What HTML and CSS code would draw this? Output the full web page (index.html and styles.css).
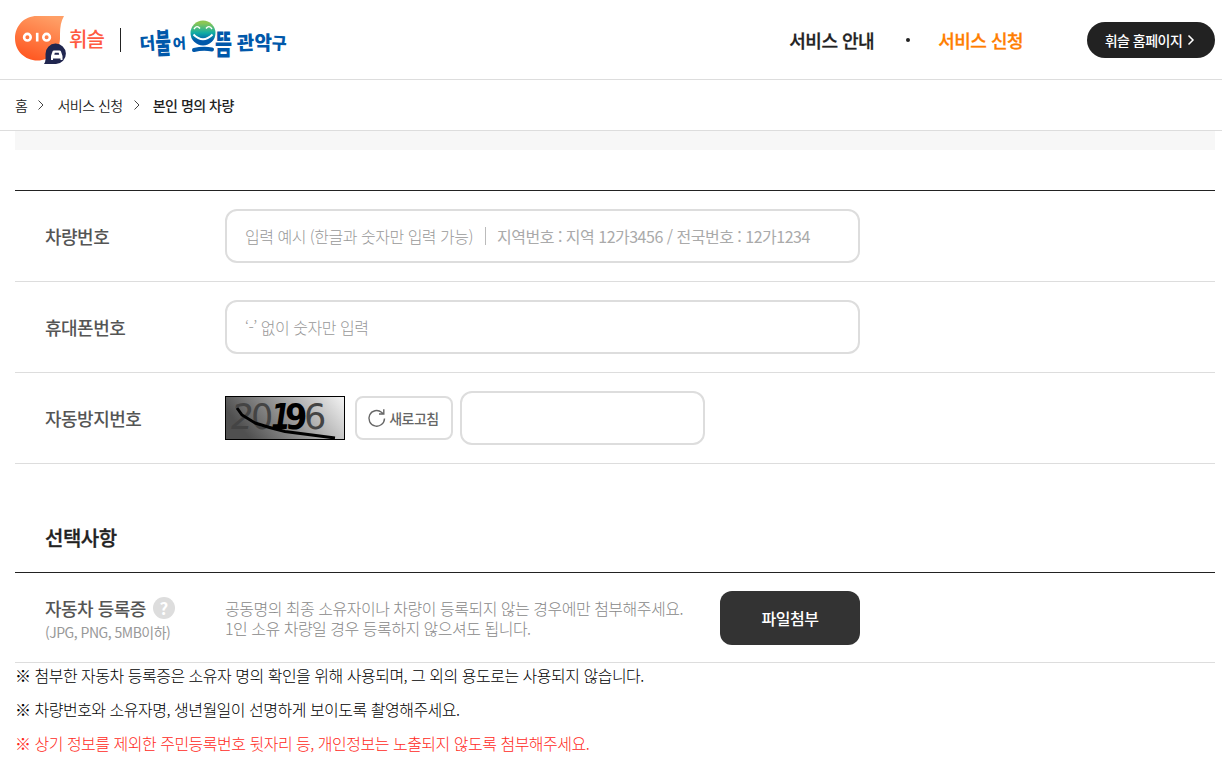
FILE: index.html
```html
<!DOCTYPE html>
<html lang="ko">
<head>
    <meta charset="UTF-8">
    <meta name="viewport" content="width=device-width, initial-scale=1.0">
    <title>휘슬</title>
    <link rel="stylesheet" href="styles.css">
</head>
<body>
    <header class="header">
        <div class="inner">
            <a class="logo">
                <svg width="90" height="50" viewBox="0 0 90 50">
                    <defs>
                        <linearGradient id="orange" x1="0.7" y1="0" x2="0.3" y2="1">
                            <stop offset="0" stop-color="#ff9f66"/>
                            <stop offset="1" stop-color="#ff5620"/>
                        </linearGradient>
                    </defs>
                    <path d="M22 1H49C46 6 45 12 45 19V23C45 36 35 45.500 22.500 45.500S0 36 0 23.500S9 1 22 1Z" fill="url(#orange)"/>
                    <circle cx="12.400" cy="22.200" r="3.300" fill="none" stroke="#fff" stroke-width="2.600"/>
                    <circle cx="31.600" cy="22.200" r="3.300" fill="none" stroke="#fff" stroke-width="2.600"/>
                    <path d="M22.200 17.800V26.500" stroke="#fff" stroke-width="2.600"/>
                    <path d="M29 49C31 46.500 30.500 43 30.500 39A10.200 10.200 0 1 1 41 49Z" fill="#20264f"/>
                    <path d="M37.500 36.500Q37.800 35.500 39 35.500H44.500Q45.700 35.500 46 36.500L47.500 41V45H45.500V43.500H38V45H36V41Z" fill="#fff"/>
                    <path d="M39.300 39.800L39.800 37.800H43.700L44.200 39.800Z" fill="#20264f"/>
                    <text x="54" y="32" class="logo_text">휘슬</text>
                </svg>
            </a>
            <span class="bar"></span>
            <a class="logo2">
                <svg width="150" height="46" viewBox="0 0 150 46">
                    <defs>
                        <linearGradient id="face" x1="0" y1="0" x2="0" y2="1">
                            <stop offset="0.100" stop-color="#8cc653"/>
                            <stop offset="0.500" stop-color="#10ada5"/>
                            <stop offset="0.800" stop-color="#0058aa"/>
                        </linearGradient>
                    </defs>
                    <g class="brush">
                        <text transform="translate(0 33) rotate(-4) scale(1 1)" font-size="17">더</text>
                        <text transform="translate(16 37) rotate(-3) scale(.7 1.200)" font-size="24">불</text>
                        <text transform="translate(33 32) rotate(-3) scale(.95 .950)" font-size="15">어</text>
                        <text transform="translate(75 38) scale(.66 1)" font-size="28">뜸</text>
                        <text transform="translate(97 33) rotate(-2) scale(1 1)" font-size="19">관</text>
                        <text transform="translate(114.500 33) scale(1 1)" font-size="19">악</text>
                        <text transform="translate(131.500 32) rotate(3) scale(.95 1)" font-size="17">구</text>
                    </g>
                    <circle cx="63" cy="16" r="12.500" fill="url(#face)"/>
                    <path d="M54 12Q57 7.500 60 11.500M66 11.500Q69 7.500 72 12" fill="none" stroke="#fff" stroke-width="1.400"/>
                    <path d="M53.500 17.500Q63 27 72.500 17.500" fill="none" stroke="#fff" stroke-width="1.900"/>
                    <path d="M54 33Q63 31 72 32.500" fill="none" stroke="#0058aa" stroke-width="4" stroke-linecap="round"/>
                </svg>
            </a>
            <nav class="nav">
                <a>서비스 안내</a>
                <i class="dot"></i>
                <a class="on">서비스 신청</a>
            </nav>
            <a class="home_btn">휘슬 홈페이지
                <svg width="8" height="12" viewBox="0 0 8 12"><path d="M1.500 1.500L6 6L1.500 10.500" fill="none" stroke="#fff" stroke-width="1.500"/></svg>
            </a>
        </div>
    </header>
    <div class="path">
        <div class="inner">
            <span>홈</span>
            <svg width="8" height="10" viewBox="0 0 8 10"><path d="M1.500 .5L6 5L1.500 9.500" fill="none" stroke="#444"/></svg>
            <span>서비스 신청</span>
            <svg width="8" height="10" viewBox="0 0 8 10"><path d="M1.500 .5L6 5L1.500 9.500" fill="none" stroke="#444"/></svg>
            <strong>본인 명의 차량</strong>
        </div>
    </div>
    <div class="content">
        <div class="gray_box"></div>
        <div class="form">
            <div class="row">
                <label class="tit">차량번호</label>
                <div class="field">
                    <span>입력 예시 (한글과 숫자만 입력 가능)</span><i class="line"></i><b>지역번호 : 지역 12가3456 / 전국번호 : 12가1234</b>
                </div>
            </div>
            <div class="row">
                <label class="tit">휴대폰번호</label>
                <input class="field" type="text" placeholder="‘-’ 없이 숫자만 입력">
            </div>
            <div class="row">
                <label class="tit">자동방지번호</label>
                <svg class="captcha" width="120" height="44" viewBox="0 0 120 44">
                    <defs>
                        <linearGradient id="cap" x1="0" y1="0.300" x2="1" y2="0">
                            <stop offset="0" stop-color="#505050"/>
                            <stop offset="1" stop-color="#f4f4f4"/>
                        </linearGradient>
                    </defs>
                    <rect x=".5" y=".5" width="119" height="43" fill="url(#cap)" stroke="#000"/>
                    <g class="num">
                        <text x="6" y="33" font-style="italic">2</text>
                        <text x="26" y="33">0</text>
                        <text transform="translate(46 33) scale(.8 1)" class="black" font-style="italic">1</text>
                        <text transform="translate(60 33) scale(.92 1)" class="black">9</text>
                        <text x="79" y="33">6</text>
                    </g>
                    <path d="M12 12L17 19L30 27Q45 32 60 35.500L110 42" fill="none" stroke="#000" stroke-width="3"/>
                </svg>
                <button class="refresh">
                    <svg width="18" height="20" viewBox="0 0 18 20"><path d="M16.500 10.500A7.800 7.800 0 1 1 13.500 4.200L15.500 6M15.800 1.200V6H11" fill="none" stroke="#666" stroke-width="1.400"/></svg>새로고침
                </button>
                <input class="field small" type="text">
            </div>
        </div>
        <h3 class="sub_tit">선택사항</h3>
        <div class="form">
            <div class="row file">
                <div class="tit">
                    <div class="tit_top">자동차 등록증<i class="help">?</i></div>
                    <p class="ext">(JPG, PNG, 5MB이하)</p>
                </div>
                <p class="desc">공동명의 최종 소유자이나 차량이 등록되지 않는 경우에만 첨부해주세요.<br>1인 소유 차량일 경우 등록하지 않으셔도 됩니다.</p>
                <button class="file_btn">파일첨부</button>
            </div>
        </div>
        <ul class="notice">
            <li>※ 첨부한 자동차 등록증은 소유자 명의 확인을 위해 사용되며, 그 외의 용도로는 사용되지 않습니다.</li>
            <li>※ 차량번호와 소유자명, 생년월일이 선명하게 보이도록 촬영해주세요.</li>
            <li class="red">※ 상기 정보를 제외한 주민등록번호 뒷자리 등, 개인정보는 노출되지 않도록 첨부해주세요.</li>
        </ul>
    </div>
</body>
</html>
```
FILE: styles.css
```css
*{
    margin: 0;
    padding: 0;
    box-sizing: border-box;
}
body{
    font-family: "Noto Sans CJK KR", sans-serif;
    font-size: 16px;
    letter-spacing: -0.5px;
    color: #222;
    background: #fff;
    overflow: hidden;
}
input, button{
    font-family: inherit;
    letter-spacing: inherit;
    background: #fff;
}
svg{
    display: block;
    flex: none;
    overflow: visible;
}
ul li{
    list-style: none;
}
i{
    font-style: normal;
}
.header{
    height: 80px;
    border-bottom: 1px solid #ddd;
}
.inner{
    display: flex;
    align-items: center;
    width: 1200px;
    height: 100%;
    margin-left: 15px;
}
.logo_text{
    font-size: 20px;
    font-weight: 500;
    fill: #ff5a41;
    letter-spacing: -1px;
}
.bar{
    width: 1px;
    height: 24px;
    margin: 0 19px 0 15px;
    background: #222;
}
.brush{
    font-weight: 900;
    fill: #0058aa;
    letter-spacing: 0;
}
.nav{
    display: flex;
    align-items: center;
    margin-left: auto;
    font-size: 18px;
    font-weight: 500;
}
.nav a{
    -webkit-text-stroke: 0.3px;
}
.dot{
    width: 4px;
    height: 4px;
    margin: 0 28px 0 32px;
    border-radius: 50%;
    background: #222;
}
.nav .on{
    color: #ff7e00;
}
.home_btn{
    display: flex;
    align-items: center;
    justify-content: center;
    gap: 5px;
    width: 128px;
    height: 36px;
    padding-right: 2px;
    margin-left: 64px;
    border-radius: 18px;
    background: #222;
    color: #fff;
    font-size: 14px;
    font-weight: 500;
}
.path{
    height: 51px;
    border-bottom: 1px solid #ddd;
    font-size: 14px;
    font-weight: 350;
}
.path svg{
    margin: 0 12px 0 10px;
}
.path strong{
    font-weight: 500;
}
.content{
    width: 1200px;
    margin-left: 15px;
}
.gray_box{
    height: 19px;
    margin-bottom: 40px;
    background: #f7f7f7;
}
.form{
    border-top: 1px solid #222;
}
.row{
    display: flex;
    align-items: center;
    height: 91px;
    padding-left: 30px;
    border-bottom: 1px solid #ddd;
}
.row.file{
    height: 90px;
}
.tit{
    width: 180px;
    font-size: 18px;
    font-weight: 500;
    color: #555;
}
.field{
    display: flex;
    align-items: center;
    width: 635px;
    height: 54px;
    padding: 0 18px;
    border: 2px solid #ddd;
    border-radius: 12px;
    font-size: 16px;
    font-weight: 300;
    color: #999;
}
.field::placeholder{
    color: #999;
}
.field b{
    font-weight: 400;
    color: #aaa;
}
.line{
    width: 1px;
    height: 18px;
    margin: 0 11px 0 12px;
    background: #bbb;
}
.field.small{
    width: 245px;
}
.num{
    font-family: "DejaVu Sans", sans-serif;
    font-size: 35px;
    letter-spacing: 0;
    fill: #444;
}
.num .black{
    font-weight: 700;
    fill: #000;
}
.refresh{
    display: flex;
    align-items: center;
    justify-content: center;
    gap: 3px;
    width: 98px;
    height: 44px;
    padding-right: 1px;
    margin: 0 7px 0 10px;
    border: 2px solid #ddd;
    border-radius: 8px;
    font-size: 14px;
    font-weight: 500;
    color: #666;
}
.sub_tit{
    height: 108px;
    padding: 59px 0 0 30px;
    font-size: 20px;
    font-weight: 500;
    line-height: 30px;
    -webkit-text-stroke: 0.3px;
}
.tit_top{
    display: flex;
    align-items: center;
    padding-top: 2px;
    line-height: 26px;
}
.help{
    width: 22px;
    height: 22px;
    margin-left: 7px;
    border-radius: 50%;
    background: #ddd;
    color: #fff;
    font-size: 17px;
    font-weight: 700;
    line-height: 22px;
    letter-spacing: 0;
    text-align: center;
}
.ext{
    font-size: 14px;
    font-weight: 400;
    line-height: 22px;
    color: #999;
}
.desc{
    width: 495px;
    font-weight: 300;
    line-height: 20px;
    color: #888;
}
.file_btn{
    width: 140px;
    height: 54px;
    border: 0;
    border-radius: 12px;
    background: #333;
    color: #fff;
    font-size: 16px;
    font-weight: 500;
}
.notice{
    margin-top: -5px;
}
.notice li{
    font-weight: 300;
    line-height: 34px;
    color: #000;
}
.notice .red{
    color: #ff2a1c;
}
```
